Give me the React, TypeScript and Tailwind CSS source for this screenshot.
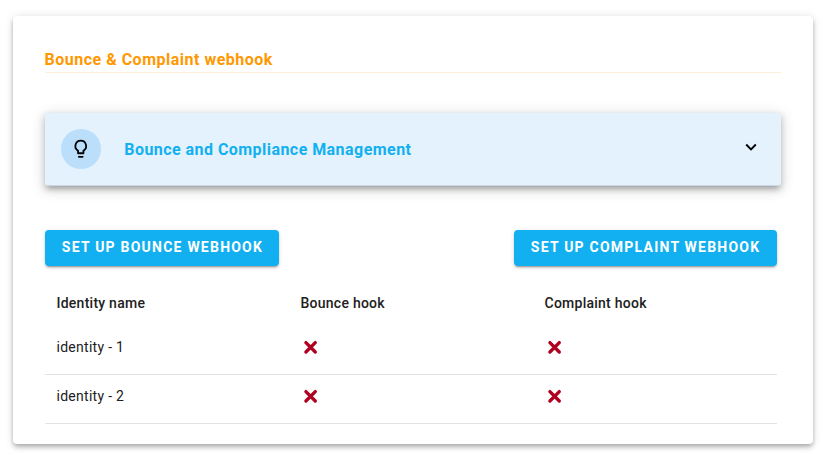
const identities = ["identity - 1", "identity - 2"];

function Cross() {
  return (
    <svg viewBox="0 0 20 20" className="size-5" role="img" aria-label="Not configured">
      <path
        d="M4.9 5.6 14.3 15M14.3 5.6 4.9 15"
        stroke="#b00020"
        strokeWidth="3.3"
        strokeLinecap="round"
        fill="none"
      />
    </svg>
  );
}

function ActionButton({ label, width }: { label: string; width: string }) {
  return (
    <button
      className={`${width} flex h-9 items-center rounded bg-[#12b0f1] pb-0.5 pl-[16.8px] text-sm font-bold tracking-[1.23px] whitespace-nowrap text-white shadow-[0_3px_1px_-2px_rgba(0,0,0,0.2),0_2px_2px_0_rgba(0,0,0,0.14),0_1px_5px_0_rgba(0,0,0,0.12)]`}
    >
      {label}
    </button>
  );
}

export default function App() {
  return (
    <div className="h-[461px] bg-white px-[13px] pt-4 font-['Roboto',sans-serif] text-[#212121]">
      <main className="h-[428px] w-[800px] rounded bg-white px-8 pt-8 shadow-[0_2px_4px_-1px_rgba(0,0,0,0.2),0_4px_5px_0_rgba(0,0,0,0.14),0_1px_10px_0_rgba(0,0,0,0.12)]">
        <h1 className="h-[25px] w-[736px] border-b border-[#fff0dc] text-base leading-[23px] font-bold tracking-[0.5px] text-[#ff9800]">
          <span className="-ml-[0.5px]">Bounce &amp; Complaint webhook</span>
        </h1>
        <section className="mt-10 flex h-[73px] w-[736px] items-center rounded-xs border-b border-[#cad7e2] bg-[#e3f2fd] pr-5 pl-4 shadow-[0_5px_5px_-3px_rgba(0,0,0,0.2),0_3px_6px_1px_rgba(0,0,0,0.14),0_3px_14px_2px_rgba(0,0,0,0.12)]">
          <div className="flex size-10 items-center justify-center rounded-full bg-[#bbdefb]">
            <svg viewBox="0 0 24 24" className="mr-px mb-px size-[21.5px]" fill="#000">
              <path d="M12 2a7 7 0 0 0-4 12.74V17a1 1 0 0 0 1 1h6a1 1 0 0 0 1-1v-2.26A7 7 0 0 0 12 2m0 2a5 5 0 0 1 2.85 9.1L14 13.7V16h-4v-2.3l-.85-.6A5 5 0 0 1 12 4M9 20h6v1a1 1 0 0 1-1 1h-4a1 1 0 0 1-1-1z" />
            </svg>
          </div>
          <h2 className="ml-[23.3px] grow pt-0.5 text-base font-bold tracking-[0.45px] text-[#12b0f1]">
            Bounce and Compliance Management
          </h2>
          <svg viewBox="0 0 20 20" className="mb-1 size-5" fill="none" stroke="#000" strokeWidth="1.9">
            <path d="m5.2 7.5 4.8 4.8 4.8-4.8" />
          </svg>
        </section>
        <div className="mt-11 flex w-[732px] justify-between">
          <ActionButton label="SET UP BOUNCE WEBHOOK" width="w-[234px]" />
          <ActionButton label="SET UP COMPLAINT WEBHOOK" width="w-[263px]" />
        </div>
        <table className="mt-2.5 w-[732px] table-fixed border-collapse text-left text-sm tracking-[0.25px]">
          <thead>
            <tr className="h-[49px]">
              <th className="p-0 pt-[5px] pl-[11.5px] font-medium">Identity name</th>
              <th className="p-0 pt-[5px] pl-[11.5px] font-medium">Bounce hook</th>
              <th className="p-0 pt-[5px] pl-[11.5px] font-medium">Complaint hook</th>
            </tr>
          </thead>
          <tbody>
            {identities.map((name) => (
              <tr key={name} className="h-[49px] border-b border-[#e2e2e2]">
                <td className="p-0 pb-[5px] pl-[11.5px] tracking-[0.28px]">{name}</td>
                <td className="p-0 pb-[5px] pl-[11.5px]"><Cross /></td>
                <td className="p-0 pb-[5px] pl-[11.5px]"><Cross /></td>
              </tr>
            ))}
          </tbody>
        </table>
      </main>
    </div>
  );
}
